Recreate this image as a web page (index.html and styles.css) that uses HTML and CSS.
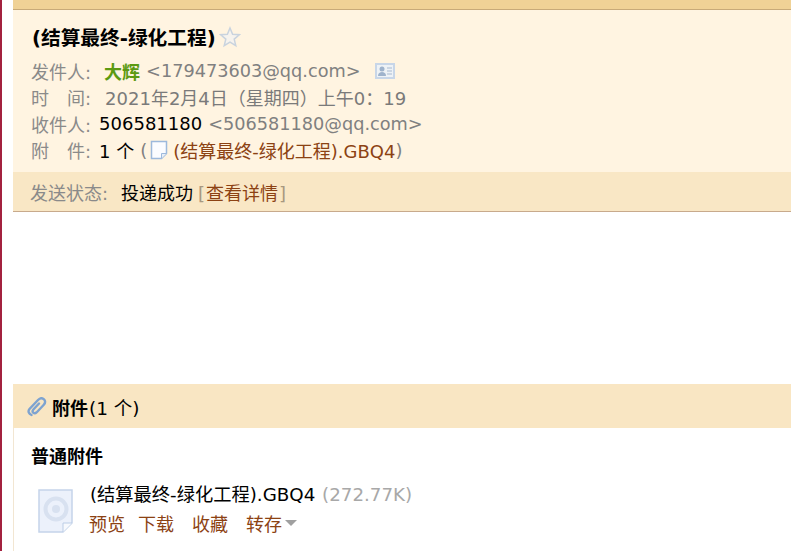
FILE: index.html
```html
<!DOCTYPE html>
<html lang="zh-CN">
<head>
<meta charset="UTF-8">
<meta name="viewport" content="width=device-width, initial-scale=1.0">
<title>(结算最终-绿化工程)</title>
<link rel="stylesheet" href="styles.css">
</head>
<body>
<div class="page">
 <!-- 邮件头 -->
 <div class="top-bar"></div>
 <div class="mail-head">
  <h1 class="subject">(结算最终-绿化工程)
   <svg class="star" width="22" height="22" viewBox="0 0 22 22"><path d="M11 2l2.600 6.200 6.700.5-5.100 4.400 1.600 6.600L11 16.200l-5.800 3.500 1.600-6.600-5.100-4.400 6.700-.5z" fill="#f6f3ee" stroke="#c9d3de" stroke-width="1.500"/></svg>
  </h1>
  <div class="info-row"><span class="label">发件人:</span><b class="sender">大辉</b><span class="addr">&lt;179473603@qq.com&gt;</span>
   <svg class="card" width="20" height="16" viewBox="0 0 20 16"><rect width="20" height="16" fill="#c8d6e8"/><rect x="2" y="2" width="16" height="12" fill="#eef2f6"/><circle cx="7" cy="6" r="2.500" fill="#9fb3cc"/><path d="M3 13c0-3 2-4 4-4s4 1 4 4z" fill="#9fb3cc"/><path d="M12 5h5M12 8h5M12 11h5" stroke="#a9bad0"/></svg>
  </div>
  <div class="info-row"><span class="label">时　间:</span><span class="date">2021年2月4日（星期四）上午0：19</span></div>
  <div class="info-row"><span class="label short">收件人:</span><span class="name">506581180</span><span class="addr">&lt;506581180@qq.com&gt;</span></div>
  <div class="info-row"><span class="label short">附　件:</span><span class="name">1 个</span><span class="paren">(</span>
   <svg class="file-small" width="18" height="20" viewBox="0 0 18 20"><path d="M1.500 1.500h15v12l-5 5h-10z" fill="#fbfcff" stroke="#9db9dc" stroke-width="1.500"/><path d="M11.500 18.500v-5h5" fill="#e8eef6" stroke="#9db9dc"/></svg>
   <a class="link" href="#">(结算最终-绿化工程).GBQ4</a><span class="paren">)</span>
  </div>
 </div>
 <div class="status-bar"><span class="label status-label">发送状态:</span><span class="status">投递成功</span><a class="link detail" href="#"><span class="bracket">[</span>查看详情<span class="bracket">]</span></a></div>

 <div class="mail-body"></div>

 <!-- 附件 -->
 <div class="attach-head">
  <svg class="clip" width="20" height="20" viewBox="0 0 20 20"><path d="M4.500 18C2 17 .5 14.500 2.500 12L11 3c2-2 4.500-2 6-.7s1.500 3.700-.2 5.500l-7 7.400c-1.200 1.200-2.700 1.300-3.600.4s-.6-2.300.4-3.400l5.400-5.700" fill="none" stroke="#7ea3d0" stroke-width="2.400" stroke-linecap="round"/></svg>
  <b>附件</b><span class="attach-count">(1 个)</span>
 </div>
 <div class="attach-body">
  <h2 class="attach-title">普通附件</h2>
  <div class="attach-item">
   <svg class="file-big" width="36" height="44" viewBox="0 0 36 44"><path d="M1 1h33v33l-9 9H1z" fill="#ecf1fb" stroke="#c5d4ea" stroke-width="1.500"/><path d="M25 43V34h9" fill="#f7f9fd" stroke="#bccde6"/><circle cx="18" cy="20" r="10.500" fill="none" stroke="#d8e1f0" stroke-width="4"/><circle cx="18" cy="20" r="4" fill="#d8e1f0"/></svg>
   <div class="attach-text">
    <div class="attach-name">(结算最终-绿化工程).GBQ4 <span class="size">(272.77K)</span></div>
    <div class="attach-actions"><a class="link preview" href="#">预览</a><a class="link" href="#">下载</a><a class="link" href="#">收藏</a><a class="link" href="#">转存</a><i class="arrow"></i></div>
   </div>
  </div>
 </div>
</div>
</body>
</html>
```
FILE: styles.css
```css
html, body {
 margin: 0;
 height: 100%;
 overflow: hidden;
 background-color: #fff;
}
body {
 font-family: "DejaVu Sans", "Noto Sans CJK SC", sans-serif;
 font-size: 18px;
 color: #000;
}
a {
 text-decoration: none;
}
.page {
 height: 100%;
 border-left: 2px solid #a3213f;
 padding-left: 11px;
}
.top-bar {
 height: 9px;
 background-color: #f0d296;
 border-bottom: 1px solid #c8aa78;
}
.mail-head {
 height: 162px;
 box-sizing: border-box;
 padding: 13px 0 0 18px;
 background-color: #fff4e1;
}
.subject {
 display: flex;
 align-items: center;
 gap: 3px;
 margin: 0 0 8px;
 padding-left: 1px;
 height: 27px;
 font-size: 19.700px;
 font-weight: bold;
}
.info-row {
 display: flex;
 align-items: center;
 height: 26.300px;
 white-space: nowrap;
 color: #808080;
}
.label {
 color: #8a8a8a;
 margin-right: 13px;
}
.label.short {
 margin-right: 8px;
}
.sender {
 color: #5c9a12;
 margin-right: 6px;
}
.addr {
 font-size: 17.700px;
}
.date {
 color: #7a7a7a;
 margin-left: 1px;
}
.name {
 color: #000;
 margin-right: 6px;
}
.card {
 margin-left: 14px;
}
.paren {
 color: #808080;
}
.file-small {
 margin: 0 5px 0 3px;
}
.link {
 color: #8c4213;
}
.status-bar {
 display: flex;
 align-items: center;
 height: 39px;
 padding-left: 17px;
 background-color: #f9e7c5;
 border-bottom: 1px solid #c8aa8c;
}
.status-label {
 margin-right: 13px;
}
.status {
 margin-right: 4px;
}
.bracket {
 color: #a89880;
 margin: 0 1px;
}
.mail-body {
 height: 172px;
}
.attach-head {
 display: flex;
 align-items: center;
 height: 44px;
 padding: 2px 0 0 14px;
 box-sizing: border-box;
 background-color: #f9e6c3;
}
.clip {
 margin-right: 5px;
}
.attach-count {
 margin-left: 1px;
 font-size: 18.500px;
}
.attach-body {
 border-left: 1px solid #f2e6d2;
 padding-left: 17px;
 height: 123px;
}
.attach-title {
 margin: 0;
 padding-top: 15px;
 height: 36px;
 line-height: 28px;
 font-size: 18px;
 font-weight: bold;
}
.attach-item {
 display: flex;
 margin-top: 2px;
 gap: 15px;
}
.file-big {
 margin: 8px 0 0 7px;
}
.attach-name {
 height: 28px;
 line-height: 28px;
 padding-left: 1px;
 font-size: 18.250px;
}
.size {
 color: #a8a8a8;
 margin-left: 1px;
}
.attach-actions {
 display: flex;
 align-items: center;
 height: 28px;
}
.attach-actions .link {
 margin-right: 18px;
}
.attach-actions .preview {
 margin-right: 13px;
}
.attach-actions .link:last-of-type {
 margin-right: 3px;
}
.arrow {
 width: 0;
 height: 0;
 border: 6px solid transparent;
 border-top-color: #a0a0a0;
 border-bottom: 0;
}
```
